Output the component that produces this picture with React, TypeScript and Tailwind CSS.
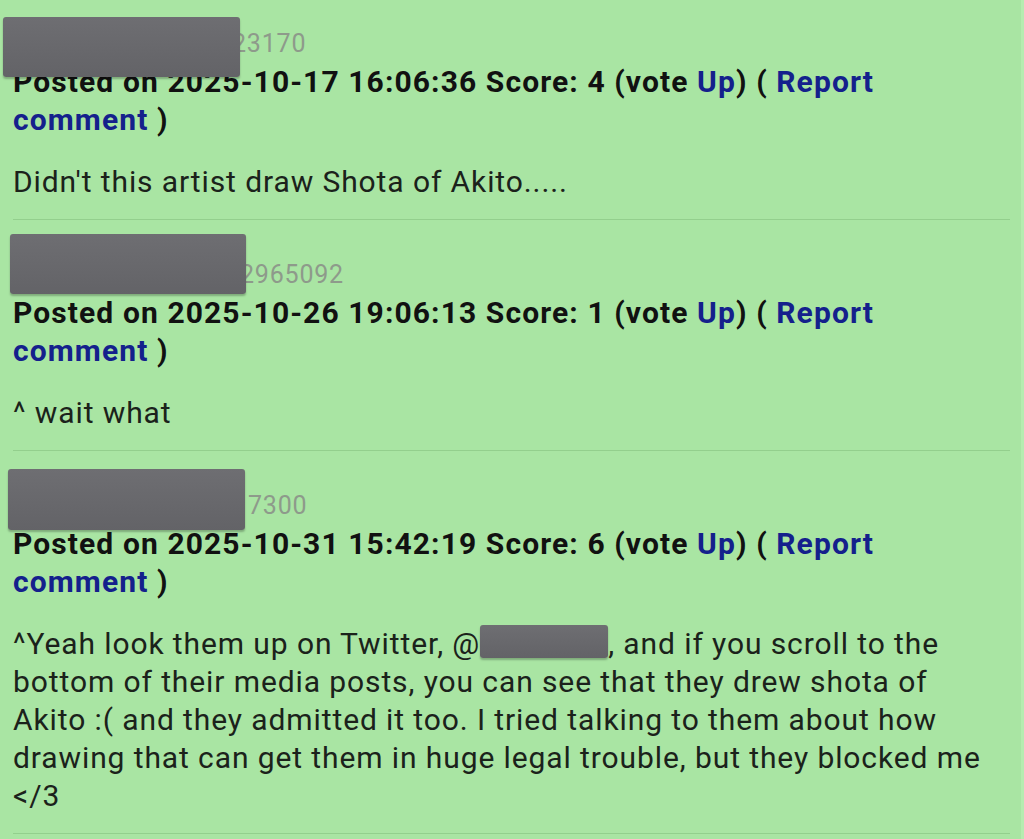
type Comment = {
  id: string;
  digitsOffset: number;
  mask: { left: number; top: number; width: number; height: number };
  posted: string;
  score: number;
  body: React.ReactNode;
};

function Mask({ className = "" }: { className?: string }) {
  return (
    <span
      className={`block rounded-[3px] bg-gradient-to-b from-[#6e6e72] to-[#636367] shadow-[0_2px_2px_rgba(0,0,0,0.25)] ${className}`}
    />
  );
}

const comments: Comment[] = [
  {
    id: "23170",
    digitsOffset: 219,
    mask: { left: -10, top: -8, width: 237, height: 60 },
    posted: "2025-10-17 16:06:36",
    score: 4,
    body: "Didn't this artist draw Shota of Akito.....",
  },
  {
    id: "2965092",
    digitsOffset: 227,
    mask: { left: -3, top: -22, width: 236, height: 60 },
    posted: "2025-10-26 19:06:13",
    score: 1,
    body: "^ wait what",
  },
  {
    id: "7300",
    digitsOffset: 235,
    mask: { left: -5, top: -18, width: 237, height: 61 },
    posted: "2025-10-31 15:42:19",
    score: 6,
    body: (
      <>
        ^Yeah look them up on Twitter, @
        <span className="inline-block h-[33px] w-[128px] align-top">
          <Mask className="h-full w-full" />
        </span>
        , and if you scroll to the bottom of their media posts, you can see
        that they drew shota of Akito :( and they admitted it too. I tried
        talking to them about how drawing that can get them in huge legal
        trouble, but they blocked me &lt;/3
      </>
    ),
  },
];

export default function App() {
  return (
    <div
      className="min-h-screen border-r-[3px] border-[#b6ecb0] bg-[#a9e5a3] pl-[13px] pr-[11px] pt-[25px]"
      style={{ fontFamily: "Roboto, 'Liberation Sans', sans-serif" }}
    >
      {comments.map((c, i) => (
        <div
          key={c.id}
          className={`border-b border-[#93cf8d] pb-[18px] ${i > 0 ? "pt-[36px]" : ""}`}
        >
          {/* user line, name is blacked out */}
          <div className="relative text-[25px] leading-[38px] tracking-[0.8px] text-[#8e9a8b]">
            <span style={{ marginLeft: c.digitsOffset }}>{c.id}</span>
            <span
              className="absolute z-10"
              style={{
                left: c.mask.left,
                top: c.mask.top,
                width: c.mask.width,
                height: c.mask.height,
              }}
            >
              <Mask className="h-full w-full" />
            </span>
          </div>
          <div className="text-[30px] font-bold leading-[38px] tracking-[1.1px] text-[#111]">
            Posted on {c.posted} Score: {c.score} (vote{" "}
            <span className="text-[#14208c]">Up</span>) ({" "}
            <span className="text-[#14208c]">Report comment</span> )
          </div>
          <p className="mt-[24px] pr-[12px] text-[30px] leading-[38px] tracking-[0.9px] text-[#1b221b]">
            {c.body}
          </p>
        </div>
      ))}
    </div>
  );
}
